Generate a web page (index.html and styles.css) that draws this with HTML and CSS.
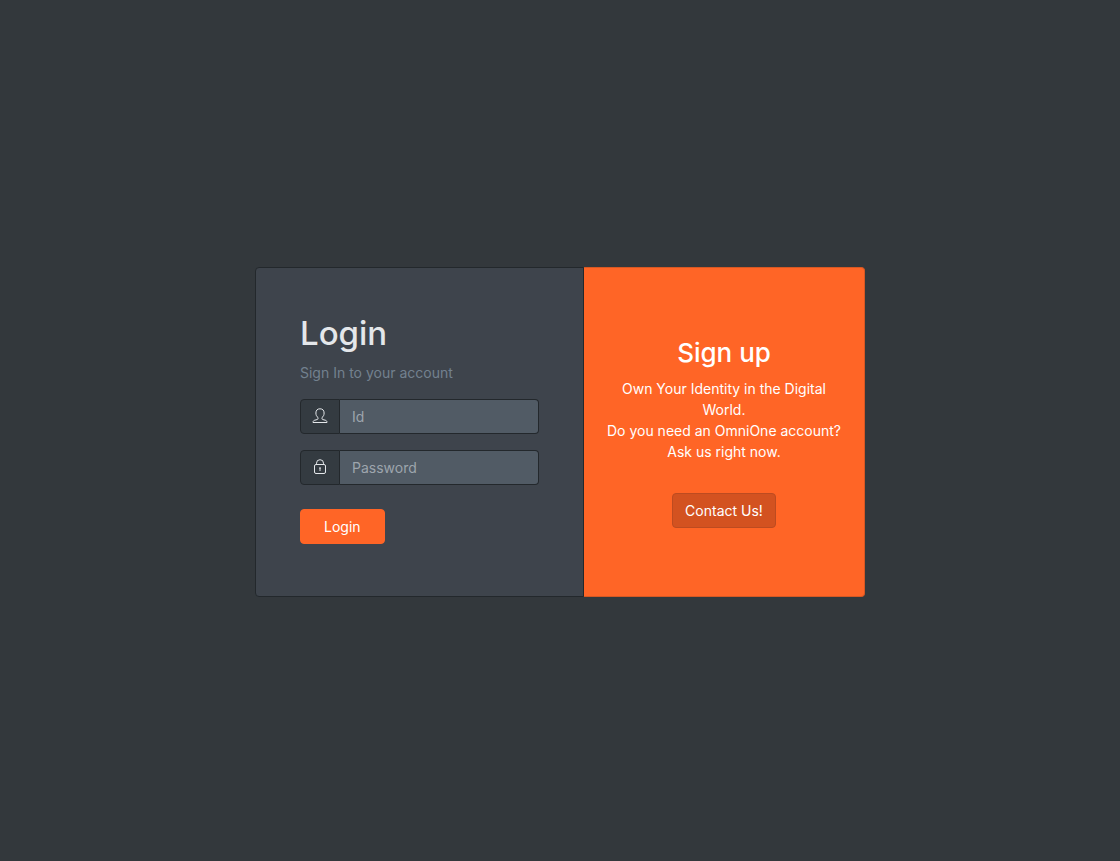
FILE: index.html
```html
<!DOCTYPE html>
<html lang="en">
<head>
<meta charset="utf-8">
<meta name="viewport" content="width=device-width, initial-scale=1">
<title>Login</title>
<link rel="stylesheet" href="styles.css">
</head>
<body>
<main class="page">
  <div class="card-group">
    <section class="card login">
      <h1 class="login-title">Login</h1>
      <p class="muted">Sign In to your account</p>
      <form>
        <div class="field">
          <label class="addon" for="user-id" aria-label="Id">
            <svg class="icon" viewBox="0 0 16 16" aria-hidden="true"><path d="M6 9.500C4.600 8.600 3.900 7 3.900 5C3.900 2.300 5.400.8 8 .8s4.100 1.500 4.100 4.200c0 2-.7 3.600-2.100 4.500v1.200c0 .4.3.7.7.8l2.900.8c.9.3 1.400.9 1.400 2.200H1c0-1.300.5-1.900 1.400-2.200l2.900-.8c.4-.1.7-.4.7-.8z"/></svg>
          </label>
          <input class="control" id="user-id" type="text" placeholder="Id">
        </div>
        <div class="field">
          <label class="addon" for="password" aria-label="Password">
            <svg class="icon" viewBox="0 0 16 16" aria-hidden="true"><rect x="2.500" y="5.500" width="11" height="9" rx="1.500"/><path d="M4.500 5.500V4.200a3.500 3.500 0 0 1 7 0v1.300M7 9h2M8 9v3"/></svg>
          </label>
          <input class="control" id="password" type="password" placeholder="Password">
        </div>
        <button class="button primary" type="submit">Login</button>
      </form>
    </section>
    <section class="card signup">
      <h2 class="signup-title">Sign up</h2>
      <p class="signup-text">Own Your Identity in the Digital World.<br>Do you need an OmniOne account?<br>Ask us right now.</p>
      <button class="button contact" type="button">Contact Us!</button>
    </section>
  </div>
</main>
</body>
</html>
```
FILE: styles.css
```css
*, *::before, *::after { box-sizing: border-box; }

body {
  margin: 0;
  background: #33383c;
  color: #e4e7ea;
  font: 400 14px/21px Inter, "Liberation Sans", sans-serif;
}

.page {
  display: flex;
  align-items: center;
  justify-content: center;
  min-height: 100vh;
  padding: 18px 15px 15px;
}

.card-group {
  display: grid;
  grid-template-columns: minmax(0, 329fr) minmax(0, 281fr);
  width: 100%;
  max-width: 610px;
}

.card { border: 1px solid #23282c; }

.login {
  padding: 44px 44px 52px;
  background: #3e444c;
  border-radius: 4px 0 0 4px;
}

.login-title {
  margin: 0 0 8px;
  font-size: 33px;
  font-weight: 500;
  line-height: 42px;
}

.muted {
  margin: 0 0 16px;
  color: #73818f;
}

.field {
  display: flex;
  height: 35px;
  margin-bottom: 16px;
}

.addon {
  display: flex;
  flex: none;
  justify-content: center;
  width: 40px;
  padding-top: 8px;
  background: #343b41;
  border: 1px solid #23282c;
  border-radius: 4px 0 0 4px;
}

.icon {
  width: 16px;
  height: 16px;
  fill: none;
  stroke: #e4e7ea;
  stroke-width: 1;
  stroke-linejoin: round;
}

.control {
  flex: 1;
  width: 0;
  min-width: 0;
  padding: 0 12px;
  background: #515b65;
  border: 1px solid #23282c;
  border-left: 0;
  border-radius: 0 4px 4px 0;
  color: #e4e7ea;
  font: inherit;
}

.control::placeholder { color: #9da5ad; opacity: 1; }

.button {
  height: 35px;
  border: 1px solid #ff6526;
  border-radius: 4px;
  background: #ff6526;
  color: #fff;
  font: inherit;
  cursor: pointer;
}

.primary { display: block; margin-top: 24px; padding: 0 23px; }

.signup {
  display: flex;
  flex-direction: column;
  align-items: center;
  justify-content: center;
  padding: 20px;
  background: #ff6526;
  border-color: #d65823;
  border-left: 0;
  border-radius: 0 4px 4px 0;
  color: #fff;
  text-align: center;
}

.signup-title {
  margin: 0 0 8px;
  font-size: 26px;
  font-weight: 500;
  line-height: 34px;
}

.signup-text { margin: 0 0 31px; }

.contact {
  padding: 0 12px;
  background: #d35220;
  border-color: #bd4b20;
}
```
